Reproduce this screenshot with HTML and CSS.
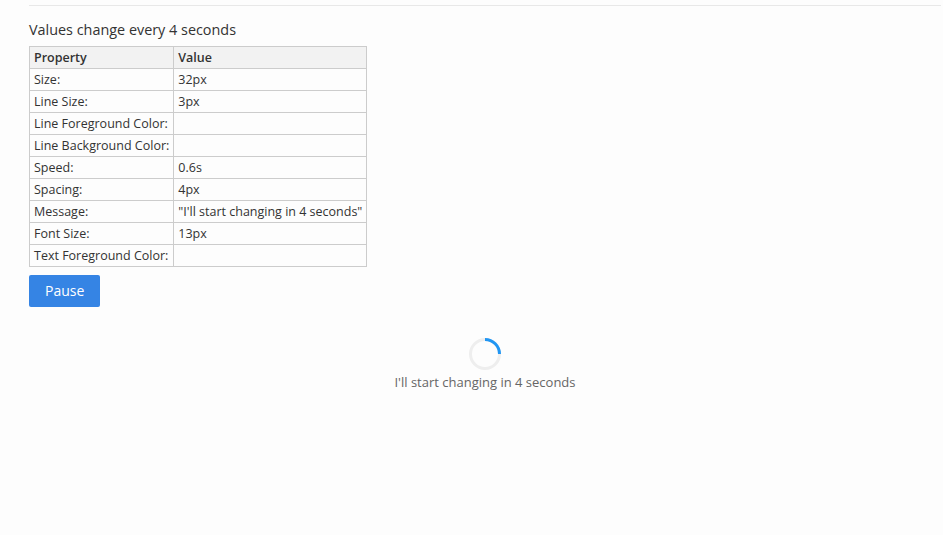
FILE: index.html
```html
<!DOCTYPE html>
<html>
<head>
<meta charset="utf-8">
<link rel="stylesheet" href="styles.css">
</head>
<body>
<div class="page">
  <div class="rule"></div>
  <h3 class="title">Values change every 4 seconds</h3>
  <table class="props">
    <thead>
      <tr><th>Property</th><th>Value</th></tr>
    </thead>
    <tbody>
      <tr><td>Size:</td><td>32px</td></tr>
      <tr><td>Line Size:</td><td>3px</td></tr>
      <tr><td>Line Foreground Color:</td><td></td></tr>
      <tr><td>Line Background Color:</td><td></td></tr>
      <tr><td>Speed:</td><td>0.6s</td></tr>
      <tr><td>Spacing:</td><td>4px</td></tr>
      <tr><td>Message:</td><td>"I'll start changing in 4 seconds"</td></tr>
      <tr><td>Font Size:</td><td>13px</td></tr>
      <tr><td>Text Foreground Color:</td><td></td></tr>
    </tbody>
  </table>
  <button class="btn">Pause</button>
  <div class="spinner-wrap">
    <svg class="spinner" width="32" height="32" viewBox="0 0 32 32">
      <circle cx="16" cy="16" r="14.5" fill="none" stroke="#eeeeee" stroke-width="3"/>
      <path d="M16 1.5 A14.5 14.5 0 0 1 30.5 16" fill="none" stroke="#2196f3" stroke-width="3"/>
    </svg>
    <div class="spinner-msg">I'll start changing in 4 seconds</div>
  </div>
</div>
</body>
</html>
```
FILE: styles.css
```css
html, body {
  margin: 0;
  padding: 0;
  background: #fdfdfd;
}
body {
  font-family: "Open Sans", "Liberation Sans", sans-serif;
  color: #333;
}
.page {
  margin: 0 2px 0 29px;
  padding-top: 5px;
}
.rule {
  height: 1px;
  background: #e8e8e8;
}
.title {
  margin: 14px 0 6px;
  font-size: 14.4px;
  font-weight: normal;
  line-height: 20px;
  color: #333;
}
.props {
  border-collapse: collapse;
  font-size: 12.5px;
  color: #333;
}
.props th, .props td {
  border: 1px solid #ccc;
  padding: 0 4px;
  height: 21px;
  line-height: 16px;
  text-align: left;
  white-space: nowrap;
}
.props th {
  background: #f2f2f2;
  font-weight: 600;
}
.props td:first-child, .props th:first-child {
  width: 135px;
}
.props td:last-child, .props th:last-child {
  width: 184px;
}
.btn {
  display: block;
  margin-top: 8px;
  height: 32px;
  padding: 0 16px;
  border: none;
  border-radius: 2px;
  background: #3584e4;
  color: #fff;
  font-family: "Open Sans", "Liberation Sans", sans-serif;
  font-size: 14px;
  line-height: 30px;
}
.spinner-wrap {
  display: flex;
  flex-direction: column;
  align-items: center;
  gap: 3px;
  margin-top: 31px;
}
.spinner {
  display: block;
}
.spinner-msg {
  font-size: 13px;
  line-height: 18px;
  color: #666;
}
```
